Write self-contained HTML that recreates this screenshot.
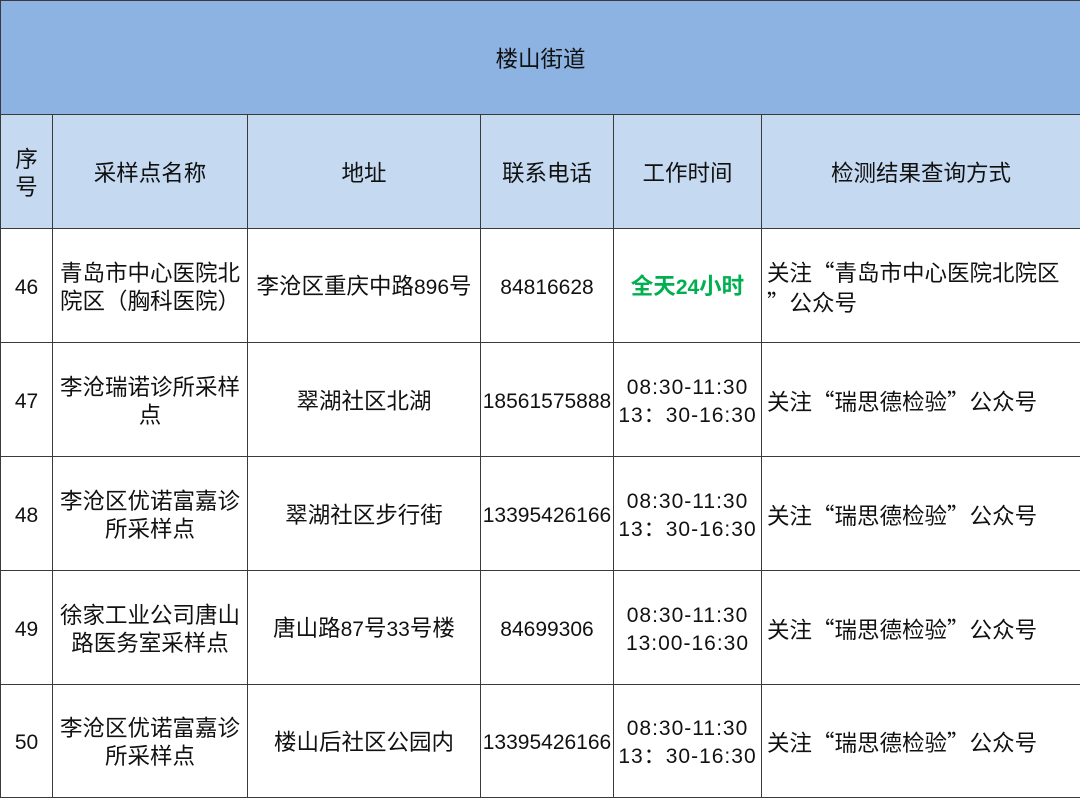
<!DOCTYPE html>
<html><head><meta charset="utf-8"><style>
html,body{margin:0;padding:0;background:#fff;}
table{position:absolute;left:0;top:0;border-collapse:collapse;table-layout:fixed;width:1080px;font-family:"Liberation Sans","Noto Sans CJK SC",sans-serif;font-size:22.5px;color:#111;}
td{border:1.5px solid #3a3a3a;text-align:center;vertical-align:middle;padding:4px 4px 0;line-height:28px;overflow:hidden;}
tr{height:114px;}
.t td{background:#8db3e2;}
.h td{background:#c5d9f1;}
td.l{text-align:left;padding-left:5px;padding-right:0;}
.g{color:#00b050;font-weight:bold;}
.n{font-size:21px;}
.tm{letter-spacing:1px;padding:4px 0 0;}
.q{font-family:"Noto Sans CJK SC",sans-serif;}
</style></head><body>
<table>
<colgroup><col style="width:52px"><col style="width:195px"><col style="width:233px"><col style="width:133px"><col style="width:148px"><col style="width:319px"></colgroup>
<tr class="t"><td colspan="6">楼山街道</td></tr>
<tr class="h"><td>序<br>号</td><td>采样点名称</td><td>地址</td><td>联系电话</td><td>工作时间</td><td>检测结果查询方式</td></tr>
<tr><td class="n">46</td><td>青岛市中心医院北院区（胸科医院）</td><td>李沧区重庆中路<span class="n">896</span>号</td><td class="n">84816628</td><td class="g">全天<span class="n">24</span>小时</td><td class="l">关注<span class="q">“</span>青岛市中心医院北院区<br><span class="q">”</span>公众号</td></tr>
<tr><td class="n">47</td><td>李沧瑞诺诊所采样点</td><td>翠湖社区北湖</td><td class="n" style="padding:4px 0 0">18561575888</td><td class="n tm">08:30-11:30<br>13：30-16:30</td><td class="l">关注<span class="q">“</span>瑞思德检验<span class="q">”</span>公众号</td></tr>
<tr><td class="n">48</td><td>李沧区优诺富嘉诊所采样点</td><td>翠湖社区步行街</td><td class="n" style="padding:4px 0 0">13395426166</td><td class="n tm">08:30-11:30<br>13：30-16:30</td><td class="l">关注<span class="q">“</span>瑞思德检验<span class="q">”</span>公众号</td></tr>
<tr><td class="n">49</td><td>徐家工业公司唐山路医务室采样点</td><td>唐山路<span class="n">87</span>号<span class="n">33</span>号楼</td><td class="n">84699306</td><td class="n tm">08:30-11:30<br>13:00-16:30</td><td class="l">关注<span class="q">“</span>瑞思德检验<span class="q">”</span>公众号</td></tr>
<tr style="height:113px"><td class="n">50</td><td>李沧区优诺富嘉诊所采样点</td><td>楼山后社区公园内</td><td class="n" style="padding:4px 0 0">13395426166</td><td class="n tm">08:30-11:30<br>13：30-16:30</td><td class="l">关注<span class="q">“</span>瑞思德检验<span class="q">”</span>公众号</td></tr>
</table>
</body></html>
